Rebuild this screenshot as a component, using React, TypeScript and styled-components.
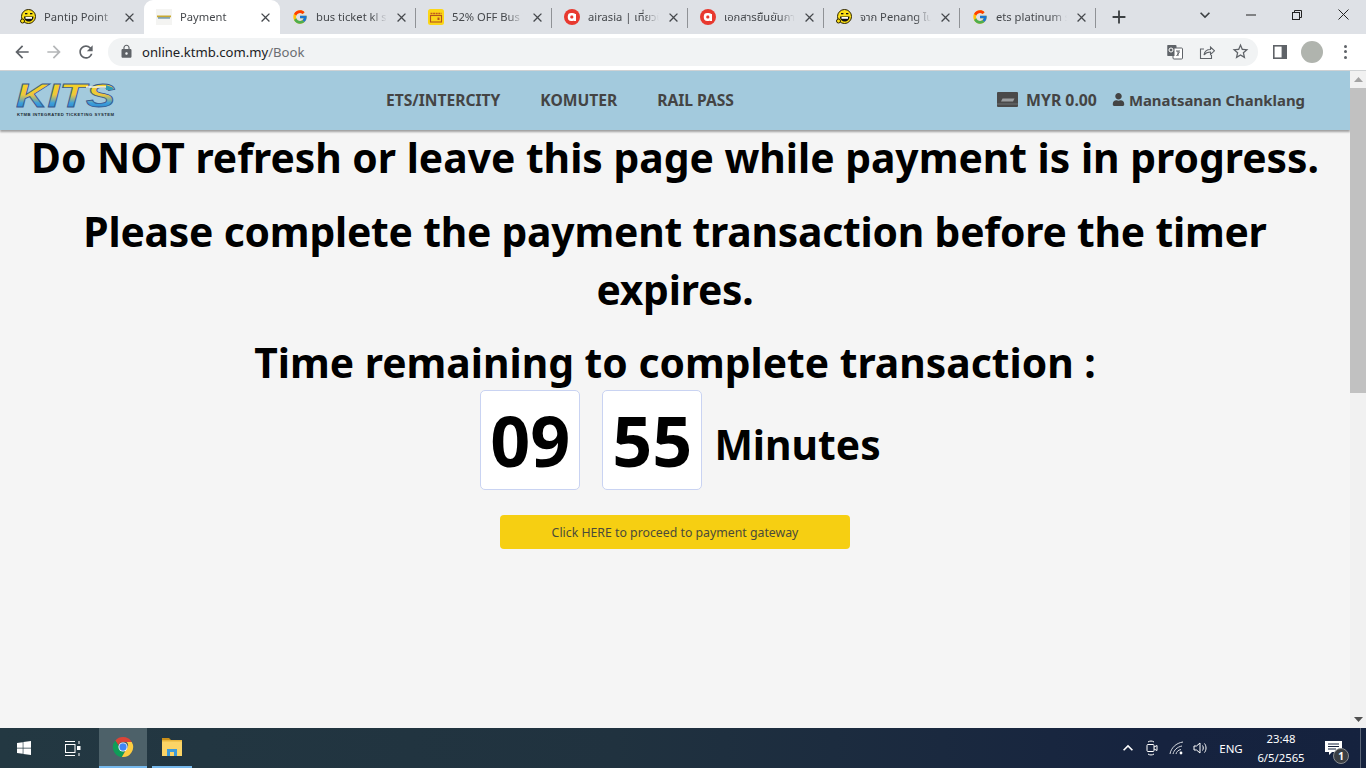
import React from 'react';
import styled, { createGlobalStyle } from 'styled-components';
import { MdArrowBack, MdArrowForward, MdRefresh, MdLock, MdStarBorder, MdClose, MdAdd, MdKeyboardArrowDown, MdKeyboardArrowUp } from 'react-icons/md';
import { FcGoogle } from 'react-icons/fc';
import { FaUser, FaWindows } from 'react-icons/fa';

const Global = createGlobalStyle`
  html, body { margin: 0; padding: 0; height: 100%; overflow: hidden; }
  body { font-family: "Noto Sans", "Open Sans", sans-serif; background: #f5f5f5; }
  * { box-sizing: border-box; }
`;
const Shell = styled.div`display:flex;flex-direction:column;width:1366px;height:768px;overflow:hidden;`;
const TabStrip = styled.div`display:flex;align-items:stretch;height:34px;background:#dee1e6;padding-left:8px;flex:none;`;
const Tab = styled.div<{ $active?: boolean; $sep?: boolean }>`
  position:relative;width:136px;display:flex;align-items:center;padding-left:12px;color:#45484c;
  background:${p => (p.$active ? '#fff' : 'transparent')};
  border-radius:${p => (p.$active ? '9px 9px 0 0' : '0')};
  ${p => p.$sep ? `&::after{content:"";position:absolute;right:0;top:8px;height:20px;width:1px;background:#8f9296;}` : ''}
`;
const FavBox = styled.span`width:16px;height:16px;flex:none;display:flex;align-items:center;justify-content:center;`;
const TabTitle = styled.span`
  margin-left:8px;width:71px;height:18px;line-height:18px;overflow:hidden;white-space:nowrap;font-size:11.2px;font-family:"Noto Sans","Noto Sans Thai","Noto Sans CJK SC",sans-serif;
  -webkit-mask-image:linear-gradient(to right,#000 78%,transparent 100%);
  mask-image:linear-gradient(to right,#000 78%,transparent 100%);
`;
const TabClose = styled.span`margin-left:6px;width:16px;height:16px;display:flex;align-items:center;justify-content:center;color:#45484c;font-size:15px;`;
const NewTab = styled.span`margin-left:12px;width:22px;display:flex;align-items:center;justify-content:center;font-size:22px;color:#3c4043;`;
const WinControls = styled.div`margin-left:auto;display:flex;align-items:flex-start;color:#3c4043;`;
const WinBtn = styled.span`width:46px;height:29px;display:flex;align-items:center;justify-content:center;`;
const Toolbar = styled.div`display:flex;align-items:center;height:37px;background:#fff;flex:none;padding-left:6px;padding-bottom:1px;border-bottom:1px solid #cfd2d4;`;
const NavIcon = styled.span<{ $dim?: boolean }>`width:32px;height:32px;display:flex;align-items:center;justify-content:center;font-size:20px;color:${p => (p.$dim ? '#b4b6b8' : '#5f6368')};`;
const Omnibox = styled.div`margin-left:6px;width:1150px;height:28px;border-radius:14px;background:#f1f3f4;display:flex;align-items:center;padding-left:10px;padding-right:8px;`;
const LockWrap = styled.span`font-size:15px;color:#5f6368;display:flex;width:16px;justify-content:center;`;
const Url = styled.span`margin-left:8px;font-size:13.1px;color:#202124;`;
const UrlPath = styled.span`color:#6b6e72;`;
const OmniIcons = styled.div`margin-left:auto;display:flex;align-items:center;gap:16px;color:#5f6368;`;
const ToolRight = styled.div`display:flex;align-items:center;color:#5f6368;margin-left:15px;`;
const Avatar = styled.span`width:22px;height:22px;border-radius:50%;background:#b0b4ae;margin-left:14px;`;
const Dots = styled.span`display:flex;flex-direction:column;gap:2.5px;margin-left:21px;`;
const Dot = styled.i`display:block;width:3px;height:3px;border-radius:50%;background:#5f6368;`;
const Viewport = styled.div`flex:1;display:flex;min-height:0;background:#f5f5f5;`;
const Page = styled.main`flex:1;min-width:0;display:flex;flex-direction:column;align-items:center;`;
const Header = styled.header`
  width:100%;height:59px;flex:none;background:#a3cadd;display:flex;align-items:center;padding:0 45px 2px 16px;
  box-shadow:0 2px 2px rgba(0,0,0,.35);color:#444;font-weight:700;
`;
const LogoBox = styled.div`width:370px;height:40px;flex:none;display:flex;align-items:center;`;
const Nav = styled.nav`display:flex;gap:40px;font-size:15.6px;`;
const Wallet = styled.div`margin-left:auto;display:flex;align-items:center;font-size:14.9px;`;
const Amount = styled.span`margin-left:8px;font-size:15.8px;`;
const UserName = styled.span`margin-left:15px;display:flex;align-items:center;gap:4px;`;
const Heading = styled.h1`width:100%;margin:0;text-align:center;font-size:40.8px;line-height:58px;font-weight:700;color:#000;`;
const FirstHeading = styled(Heading)`margin-top:-2px;margin-bottom:16px;`;
const SecondHeading = styled(Heading)`margin-bottom:15px;letter-spacing:-0.2px;`;
const Timer = styled.div`display:flex;align-items:center;justify-content:center;margin-top:-1px;`;
const Digit = styled.div`width:100px;height:100px;margin:0 11px;background:#fff;border:1px solid #c9d3f2;border-radius:5px;display:flex;align-items:center;justify-content:center;font-size:70px;font-weight:700;color:#000;`;
const Unit = styled.div`margin:0 0 0 1px;padding-top:8px;font-size:40.8px;font-weight:700;color:#000;line-height:92px;`;
const PayButton = styled.button`margin-top:25px;width:350px;height:34px;border:none;border-radius:4px;background:#f6cf12;color:#4a4a3a;font:400 12.3px "Noto Sans",sans-serif;padding:0;`;
const Scrollbar = styled.div`position:relative;width:16px;flex:none;background:#f1f1f1;display:flex;flex-direction:column;align-items:center;`;
const ScrollUp = styled.span`height:17px;display:flex;align-items:center;color:#a3a3a3;`;
const Thumb = styled.div`width:100%;height:305px;background:#c1c1c1;`;
const ScrollDown = styled.span`margin-top:auto;height:17px;display:flex;align-items:center;color:#505050;`;
const Taskbar = styled.footer`flex:none;height:40px;display:flex;align-items:stretch;color:#fff;background:linear-gradient(90deg,#233842 0%,#20323f 45%,#16233f 85%,#15223e 100%);`;
const StartBtn = styled.div`width:48px;display:flex;align-items:center;justify-content:center;font-size:16px;`;
const TaskView = styled.div`width:48px;margin-right:3px;display:flex;align-items:center;justify-content:center;`;
const TaskApp = styled.div<{ $active?: boolean; $w: number }>`
  position:relative;width:${p => p.$w}px;display:flex;align-items:center;justify-content:center;
  background:${p => (p.$active ? '#4d6169' : 'transparent')};border-bottom:2px solid #76b9ed;
`;
const AppGap = styled.div`width:5px;`;
const Tray = styled.div`margin-left:auto;display:flex;align-items:center;font-size:12px;position:relative;`;
const TrayIcon = styled.span<{ $w: number }>`width:${p => p.$w}px;display:flex;justify-content:center;align-items:center;`;
const Lang = styled.span`width:36px;text-align:center;font-size:11.5px;margin-left:1px;`;
const Clock = styled.div`width:60px;margin-left:2px;text-align:center;font-size:11.3px;line-height:19px;`;
const Notify = styled.div`position:relative;width:44px;height:40px;display:flex;align-items:center;justify-content:center;`;
const Badge = styled.span`position:absolute;left:22px;top:20px;width:16px;height:16px;border-radius:50%;background:#3b3f43;border:1px solid #8a8d90;font-size:10px;line-height:14px;text-align:center;color:#fff;font-weight:700;`;
const DesktopEdge = styled.div`width:6px;height:40px;border-left:1px solid #5b6577;margin-left:5px;`;

const Pantip = () => (
  <svg width="16" height="16" viewBox="0 0 16 16">
    <circle cx="8.5" cy="7.500" r="7" fill="#fde117" stroke="#2a2200" strokeWidth="1" />
    <circle cx="2.500" cy="12" r="2" fill="#fde117" stroke="#2a2200" />
    <rect x="5" y="4" width="2.400" height="1.300" fill="#111" /><rect x="10" y="4" width="2.400" height="1.300" fill="#111" />
    <path d="M4 7.500h9.500c0 3.500-2.200 5-4.700 5S4 11 4 7.500z" fill="#111" />
    <path d="M5.500 8h6.500v1.800H5.500z" fill="#fff" />
  </svg>
);
const KtmbFav = () => (
  <svg width="16" height="16" viewBox="0 0 16 16">
    <rect width="16" height="16" fill="#f4f4f2" /><rect x="1" y="6.500" width="14" height="1.800" fill="#c9a92e" />
    <rect x="2" y="8.300" width="12" height="1.300" fill="#5f8aa0" />
  </svg>
);
const Ticket = () => (
  <svg width="16" height="16" viewBox="0 0 16 16">
    <rect width="16" height="16" rx="2.500" fill="#fbd617" />
    <path d="M2.500 4.500h11" stroke="#c25a1e" strokeWidth="1.500" strokeDasharray="2 .6" />
    <rect x="2.500" y="6.500" width="11" height="6.500" fill="none" stroke="#b3541c" strokeWidth="1.100" />
    <rect x="9.500" y="8.500" width="2" height="2.500" fill="#b3541c" />
  </svg>
);
const AirAsia = () => (
  <svg width="16" height="16" viewBox="0 0 16 16">
    <circle cx="8" cy="8" r="8" fill="#e8392f" />
    <rect x="3.800" y="4" width="8" height="8" rx="3.400" fill="#fff" />
    <rect x="6.300" y="6.500" width="3" height="3" rx="1.200" fill="#e8392f" />
    <rect x="10" y="5" width="2" height="7" fill="#fff" />
  </svg>
);
const Chrome = () => (
  <svg width="22" height="22" viewBox="0 0 48 48">
    <path d="M24 2a22 22 0 0 1 19.050 11H24a11 11 0 0 0-10.200 6.900L7.300 9.600A22 22 0 0 1 24 2z" fill="#db4437" />
    <path d="M7.300 9.600l9.700 16.800A11 11 0 0 0 28.200 34L21.500 45.900A22 22 0 0 1 7.300 9.600z" fill="#0f9d58" />
    <path d="M43.050 13A22 22 0 0 1 21.500 45.900L31 29.500A11 11 0 0 0 32 13z" fill="#ffcd40" />
    <circle cx="24" cy="24" r="10" fill="#fff" /><circle cx="24" cy="24" r="8" fill="#4285f4" />
  </svg>
);
const Explorer = () => (
  <svg width="22" height="20" viewBox="0 0 22 20">
    <path d="M1 1h7l2 2H1z" fill="#c98f19" /><rect x="1" y="3" width="20" height="16" fill="#fbd466" />
    <rect x="1" y="3" width="20" height="1.500" fill="#e8b53c" />
    <path d="M6 19v-7h10v7h-3v-4H9v4z" fill="#3d9ad9" />
  </svg>
);
const TaskViewIcon = () => (
  <svg width="17" height="17" viewBox="0 0 17 17" fill="none" stroke="#fff" strokeWidth="1">
    <path d="M1 1.500h10M1 15.500h10" /><rect x="1.500" y="4.500" width="9.500" height="8" />
    <path d="M15 1v3M15 13v3" /><rect x="13.500" y="6.500" width="2.500" height="3" fill="#fff" />
  </svg>
);
const TranslateIcon = () => (
  <svg width="16" height="16" viewBox="0 0 16 16">
    <rect x="0.500" y="1" width="9" height="11" rx="1" fill="#5f6368" /><rect x="6" y="4" width="9.500" height="11" rx="1" fill="#fff" stroke="#5f6368" />
    <rect x="0.500" y="1" width="7" height="11" fill="#5f6368" />
    <circle cx="4" cy="6" r="2" fill="none" stroke="#fff" /><path d="M9 7h4M11 7v5M9.500 12l3-4" stroke="#5f6368" fill="none" />
  </svg>
);
const ShareIcon = () => (
  <svg width="16" height="16" viewBox="0 0 16 16" fill="none" stroke="#5f6368" strokeWidth="1.100">
    <path d="M5 5H1.500v9.500h11V11" /><path d="M5 11c.5-3.500 3-5.500 6.500-5.500V3l4 3.800-4 3.700V8C8.500 8 6.500 9 5 11z" />
  </svg>
);
const SideIcon = () => (
  <svg width="14" height="14" viewBox="0 0 14 14"><rect width="14" height="14" fill="#5f6368" /><rect x="1.600" y="1.600" width="7" height="10.800" fill="#fff" /></svg>
);
const CardIcon = () => (
  <svg width="21" height="15" viewBox="0 0 21 15"><rect width="21" height="15" rx="1" fill="#4a4a4a" /><path d="M4 9.500l1.500-3h12l-1.500 3z" fill="#9b9ea0" /><rect y="11.500" width="21" height="1" fill="#6d7072" /></svg>
);
const Logo = () => (
  <svg width="100" height="36" viewBox="0 0 100 36">
    <defs>
      <linearGradient id="kits" x1="0" y1="0" x2="0" y2="1">
        <stop offset="0" stopColor="#fbd916" /><stop offset=".48" stopColor="#eec73a" /><stop offset=".7" stopColor="#3c9fdc" /><stop offset="1" stopColor="#1b72bf" />
      </linearGradient>
    </defs>
    <text x="0" y="25" textLength="99" lengthAdjust="spacingAndGlyphs" fontFamily="Liberation Sans" fontStyle="italic" fontWeight="700" fontSize="33" fill="url(#kits)" stroke="#38588e" strokeWidth=".8">KITS</text>
    <path d="M70 5h20" stroke="#f4f4e8" strokeWidth="1.500" />
    <path d="M90 3l8 3-2 2h-6z" fill="#2f9cb6" />
    <text x="1" y="34" textLength="97" lengthAdjust="spacing" fontFamily="Liberation Sans" fontWeight="700" fontSize="4.200" fill="#1c2a33">KTMB INTEGRATED TICKETING SYSTEM</text>
  </svg>
);
const MeetIcon = () => (
  <svg width="14" height="16" viewBox="0 0 14 16" fill="none" stroke="#fff"><path d="M3 2c2-1.300 4-1.300 6 0M3 14c2 1.300 4 1.300 6 0" /><rect x="2" y="4.500" width="7" height="7" rx="1" /><path d="M9 7l3-1.500v5L9 9" /></svg>
);
const WifiIcon = () => (
  <svg width="16" height="16" viewBox="0 0 16 16" fill="none" stroke="#d6dae0"><path d="M1 14C2 8 7 3 14 2M4 14c1-4 4-7 9-8M7 14c.5-2 2-4 5-4.500" /><circle cx="12" cy="13" r="1.400" fill="#fff" stroke="none" /></svg>
);
const SpeakerIcon = () => (
  <svg width="16" height="16" viewBox="0 0 16 16" fill="none" stroke="#fff"><path d="M1 6h2.500L7 3v10L3.500 10H1z" /><path d="M9.500 5.500c1 1.500 1 3.500 0 5M11.500 3.500c2 2.500 2 6.500 0 9" /></svg>
);
const NotifyIcon = () => (
  <svg width="17" height="15" viewBox="0 0 17 15"><path d="M0 0h17v11H7l-3 3v-3H0z" fill="#fff" /><path d="M3 3h11M3 5.500h11M3 8h8" stroke="#15223e" /></svg>
);

const tabs = [
  { icon: <Pantip />, title: 'Pantip Point' },
  { icon: <KtmbFav />, title: 'Payment', active: true },
  { icon: <FcGoogle size={16} />, title: 'bus ticket kl singapore' },
  { icon: <Ticket />, title: '52% OFF Bus Tickets', sep: true },
  { icon: <AirAsia />, title: 'airasia | เที่ยวบิน', sep: true },
  { icon: <AirAsia />, title: 'เอกสารยืนยันการจอง', sep: true },
  { icon: <Pantip />, title: 'จาก Penang ไป', sep: true },
  { icon: <FcGoogle size={16} />, title: 'ets platinum schedule', sep: true },
];

export default function App() {
  return (
    <Shell>
      <Global />
      <TabStrip>
        {tabs.map((t, i) => (
          <Tab key={i} $active={t.active} $sep={t.sep || i === 2}>
            <FavBox>{t.icon}</FavBox>
            <TabTitle>{t.title}</TabTitle>
            <TabClose><MdClose /></TabClose>
          </Tab>
        ))}
        <NewTab><MdAdd /></NewTab>
        <WinControls>
          <WinBtn><MdKeyboardArrowDown size={20} /></WinBtn>
          <WinBtn><svg width="10" height="10"><path d="M0 5h10" stroke="#222" /></svg></WinBtn>
          <WinBtn><svg width="10" height="10" fill="none" stroke="#222"><rect x=".5" y="2.500" width="7" height="7" /><path d="M2.500 2.500v-2h7v7h-2" /></svg></WinBtn>
          <WinBtn><svg width="11" height="11" stroke="#222"><path d="M.5.5l10 10M10.500.5l-10 10" /></svg></WinBtn>
        </WinControls>
      </TabStrip>
      <Toolbar>
        <NavIcon><MdArrowBack /></NavIcon>
        <NavIcon $dim><MdArrowForward /></NavIcon>
        <NavIcon><MdRefresh /></NavIcon>
        <Omnibox>
          <LockWrap><MdLock /></LockWrap>
          <Url>online.ktmb.com.my<UrlPath>/Book</UrlPath></Url>
          <OmniIcons>
            <TranslateIcon />
            <ShareIcon />
            <MdStarBorder size={19} />
          </OmniIcons>
        </Omnibox>
        <ToolRight>
          <SideIcon />
          <Avatar />
          <Dots><Dot /><Dot /><Dot /></Dots>
        </ToolRight>
      </Toolbar>
      <Viewport>
        <Page>
          <Header>
            <LogoBox><Logo /></LogoBox>
            <Nav><span>ETS/INTERCITY</span><span>KOMUTER</span><span>RAIL PASS</span></Nav>
            <Wallet>
              <CardIcon />
              <Amount>MYR 0.00</Amount>
              <UserName><FaUser size={13} />Manatsanan Chanklang</UserName>
            </Wallet>
          </Header>
          <FirstHeading>Do NOT refresh or leave this page while payment is in progress.</FirstHeading>
          <SecondHeading>Please complete the payment transaction before the timer expires.</SecondHeading>
          <Heading>Time remaining to complete transaction :</Heading>
          <Timer>
            <Digit>09</Digit>
            <Digit>55</Digit>
            <Unit>Minutes</Unit>
          </Timer>
          <PayButton>Click HERE to proceed to payment gateway</PayButton>
        </Page>
        <Scrollbar>
          <ScrollUp><svg width="9" height="5"><path d="M0 5l4.500-5 4.500 5z" fill="currentColor" /></svg></ScrollUp>
          <Thumb />
          <ScrollDown><svg width="9" height="5"><path d="M0 0l4.500 5 4.500-5z" fill="currentColor" /></svg></ScrollDown>
        </Scrollbar>
      </Viewport>
      <Taskbar>
        <StartBtn><FaWindows /></StartBtn>
        <TaskView><TaskViewIcon /></TaskView>
        <TaskApp $active $w={48}><Chrome /></TaskApp>
        <AppGap />
        <TaskApp $w={40}><Explorer /></TaskApp>
        <Tray>
          <TrayIcon $w={24}><MdKeyboardArrowUp size={20} /></TrayIcon>
          <TrayIcon $w={24}><MeetIcon /></TrayIcon>
          <TrayIcon $w={25}><WifiIcon /></TrayIcon>
          <TrayIcon $w={23}><SpeakerIcon /></TrayIcon>
          <Lang>ENG</Lang>
          <Clock>23:48<br />6/5/2565</Clock>
          <Notify><NotifyIcon /><Badge>1</Badge></Notify>
          <DesktopEdge />
        </Tray>
      </Taskbar>
    </Shell>
  );
}
